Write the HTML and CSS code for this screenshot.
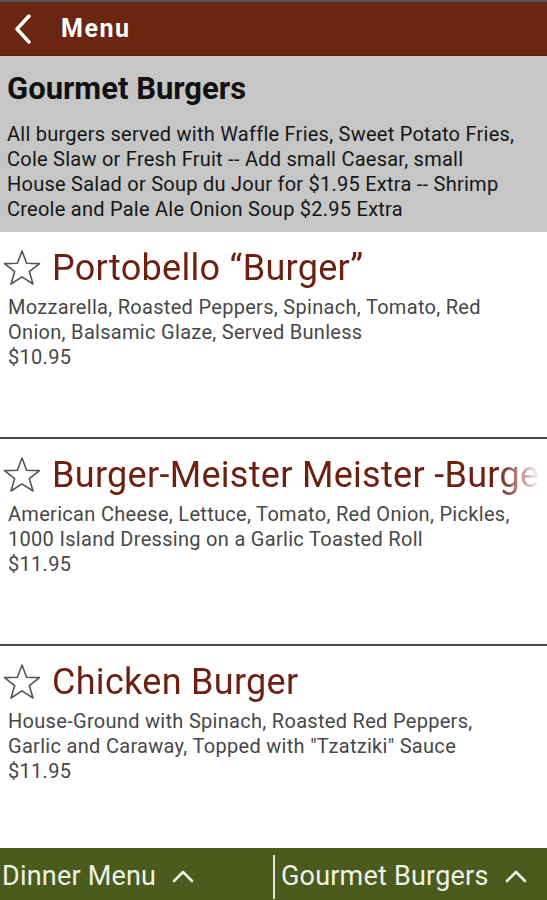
FILE: index.html
```html
<!DOCTYPE html>
<html lang="en">
<head>
    <meta charset="UTF-8">
    <meta name="viewport" content="width=device-width, initial-scale=1.0">
    <title>Menu</title>
    <link rel="stylesheet" href="styles.css">
</head>
<body>
    <div class="app">
        <div class="actionbar">
            <svg class="back" width="20" height="32" viewBox="0 0 20 32">
                <polyline points="16,3 4,16 16,29" fill="none" stroke="#fff" stroke-width="3.5" stroke-linecap="round" stroke-linejoin="round"/>
            </svg>
            <span class="bar-title">Menu</span>
        </div>

        <div class="category">
            <h1 class="cat-title">Gourmet Burgers</h1>
            <p class="cat-desc">All burgers served with Waffle Fries, Sweet Potato Fries, Cole Slaw or Fresh Fruit -- Add small Caesar, small House Salad or Soup du Jour for $1.95 Extra -- Shrimp Creole and Pale Ale Onion Soup $2.95 Extra</p>
        </div>

        <div class="list">
            <div class="item">
                <div class="item-head">
                    <svg class="star" width="38" height="38" viewBox="0 0 38 38">
                        <polygon points="19,2 23.6,14.2 36.5,14.6 26.3,22.6 30,35 19,27.8 8,35 11.7,22.6 1.5,14.6 14.4,14.2" fill="none" stroke="#555" stroke-width="1.6" stroke-linejoin="round"/>
                    </svg>
                    <span class="item-title">Portobello “Burger”</span>
                </div>
                <p class="item-desc">Mozzarella, Roasted Peppers, Spinach, Tomato, Red Onion, Balsamic Glaze, Served Bunless</p>
                <p class="item-price">$10.95</p>
            </div>

            <div class="item">
                <div class="item-head">
                    <svg class="star" width="38" height="38" viewBox="0 0 38 38">
                        <polygon points="19,2 23.6,14.2 36.5,14.6 26.3,22.6 30,35 19,27.8 8,35 11.7,22.6 1.5,14.6 14.4,14.2" fill="none" stroke="#555" stroke-width="1.6" stroke-linejoin="round"/>
                    </svg>
                    <span class="item-title">Burger-Meister Meister -Burger</span>
                </div>
                <p class="item-desc">American Cheese, Lettuce, Tomato, Red Onion, Pickles, 1000 Island Dressing on a Garlic Toasted Roll</p>
                <p class="item-price">$11.95</p>
            </div>

            <div class="item">
                <div class="item-head">
                    <svg class="star" width="38" height="38" viewBox="0 0 38 38">
                        <polygon points="19,2 23.6,14.2 36.5,14.6 26.3,22.6 30,35 19,27.8 8,35 11.7,22.6 1.5,14.6 14.4,14.2" fill="none" stroke="#555" stroke-width="1.6" stroke-linejoin="round"/>
                    </svg>
                    <span class="item-title">Chicken Burger</span>
                </div>
                <p class="item-desc">House-Ground with Spinach, Roasted Red Peppers, Garlic and Caraway, Topped with "Tzatziki" Sauce</p>
                <p class="item-price">$11.95</p>
            </div>
        </div>

        <div class="bottombar">
            <div class="tab">
                <span>Dinner Menu</span>
                <svg class="up" width="24" height="16" viewBox="0 0 24 16">
                    <polyline points="3,13 12,4 21,13" fill="none" stroke="#eef2e4" stroke-width="2.6" stroke-linecap="round" stroke-linejoin="round"/>
                </svg>
            </div>
            <div class="divider"></div>
            <div class="tab">
                <span>Gourmet Burgers</span>
                <svg class="up" width="24" height="16" viewBox="0 0 24 16">
                    <polyline points="3,13 12,4 21,13" fill="none" stroke="#eef2e4" stroke-width="2.6" stroke-linecap="round" stroke-linejoin="round"/>
                </svg>
            </div>
        </div>
    </div>
</body>
</html>
```

FILE: styles.css
```css
html, body {
    margin: 0;
    height: 100%;
    font-family: Roboto, "Liberation Sans", sans-serif;
}

.app {
    display: flex;
    flex-direction: column;
    height: 900px;
    background-color: #fff;
    border-top: 2px solid #555;
    box-sizing: border-box;
}

.actionbar {
    height: 53px;
    background-color: #6b2611;
    border-bottom: 1px solid #5a1f0e;
    display: flex;
    align-items: center;
    padding-left: 13px;
    gap: 28px;
}

.back {
    display: block;
}

.bar-title {
    color: #fff;
    font-size: 25px;
    font-weight: bold;
    letter-spacing: 1.5px;
}

.category {
    background-color: #c6c6c6;
    padding: 15px 7px 0;
    height: 176px;
    box-sizing: border-box;
}

.cat-title {
    margin: 0;
    font-size: 31px;
    font-weight: bold;
    color: #111;
    line-height: 36px;
}

.cat-desc {
    margin: 15px 0 0;
    padding-right: 15px;
    font-size: 20px;
    letter-spacing: 0.25px;
    line-height: 25px;
    color: #151515;
}

.list {
    flex: 1;
    display: flex;
    flex-direction: column;
}

.item {
    height: 207px;
    box-sizing: border-box;
    padding: 14px 8px 0;
    border-bottom: 2px solid #4a4a4a;
}

.item:last-child {
    border-bottom: none;
    flex: 1;
}

.item-head {
    display: flex;
    align-items: center;
    gap: 11px;
    margin-left: -5px;
    margin-right: -2px;
    white-space: nowrap;
    overflow: hidden;
    -webkit-mask-image: linear-gradient(to right, #000 92%, transparent);
    mask-image: linear-gradient(to right, #000 92%, transparent);
}

.star {
    flex-shrink: 0;
}

.item-title {
    font-size: 36px;
    letter-spacing: 0.3px;
    color: #6d1f10;
    line-height: 44px;
}

.item-desc, .item-price {
    margin: 0;
    font-size: 20px;
    letter-spacing: 0.3px;
    line-height: 25px;
    color: #474747;
}

.item-desc {
    margin-top: 5px;
    padding-right: 14px;
}

.bottombar {
    height: 52px;
    background-color: #4b5b1e;
    display: flex;
    align-items: center;
}

.tab {
    display: flex;
    align-items: center;
    gap: 15px;
    color: #eef2e4;
    font-size: 27px;
    letter-spacing: 0.2px;
    padding-left: 2px;
    padding-top: 4px;
    flex: 1;
}

.tab:first-child {
    flex: 0 0 271px;
}

.divider {
    width: 2px;
    height: 44px;
    background-color: #dfe5cf;
    margin-top: 6px;
    margin-right: 4px;
}
```
